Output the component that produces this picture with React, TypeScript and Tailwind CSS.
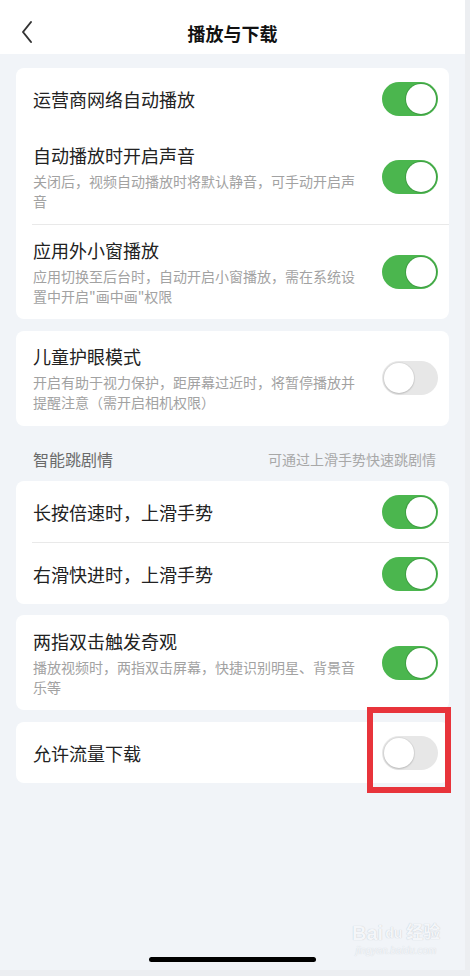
import React from "react";

const FONT = { fontFamily: '"Noto Sans CJK SC", "Noto Sans", sans-serif' };

function Toggle({ on }: { on: boolean }) {
  if (on) {
    return (
      <div className="flex h-[34px] w-[56px] shrink-0 items-center justify-end rounded-full bg-[#4bb64e] p-[2px]">
        <div className="h-[30px] w-[30px] rounded-full bg-white shadow-[0_0_0_1px_#3f9f43]" />
      </div>
    );
  }
  return (
    <div className="flex h-[34px] w-[56px] shrink-0 items-center justify-start rounded-full bg-[#e7e7e7] p-[2px]">
      <div className="h-[30px] w-[30px] rounded-full bg-white shadow-[0_1px_2px_rgba(0,0,0,0.15),0_0_0_1px_#dcdcdc]" />
    </div>
  );
}

function SimpleRow({ title, on, h = "h-[61px]" }: { title: string; on: boolean; h?: string }) {
  return (
    <div className={`flex ${h} items-center justify-between pl-[17px] pr-[11px]`}>
      <div className="text-[18px] leading-[24px] text-[#222222]">{title}</div>
      <Toggle on={on} />
    </div>
  );
}

function DescRow({
  title,
  desc,
  on,
  pt = "pt-[13px]",
  pb = "pb-[13px]",
}: {
  title: string;
  desc: string;
  on: boolean;
  pt?: string;
  pb?: string;
}) {
  return (
    <div className={`flex items-center justify-between gap-[16px] pl-[17px] pr-[11px] ${pt} ${pb}`}>
      <div className="w-[331px]">
        <div className="h-[24px] text-[18px] leading-[24px] text-[#222222]">{title}</div>
        <div className="mt-[4px] text-[14px] leading-[20px] text-[#a2a2a2]">{desc}</div>
      </div>
      <Toggle on={on} />
    </div>
  );
}

function Divider() {
  return <div className="ml-[16px] h-px bg-[#e9e9e9]" />;
}

export default function App() {
  return (
    <div className="relative flex h-[976px] w-[470px] flex-col bg-[#eceef1]" style={FONT}>
      <div className="flex h-[970px] w-[465px] flex-col bg-[#f1f4f8]">
        {/* Header */}
        <div className="relative flex h-[54px] items-center justify-center bg-white">
          <svg
            className="absolute left-[18px] top-[20px]"
            width="18"
            height="24"
            viewBox="0 0 18 24"
            fill="none"
          >
            <path d="M13 2 L5 12 L13 22" stroke="#333333" strokeWidth="2" strokeLinecap="round" strokeLinejoin="round" />
          </svg>
          <div className="mt-[12px] text-[18px] font-bold leading-[24px] text-[#111111]">播放与下载</div>
        </div>

        <div className="flex flex-col px-[16px] pt-[14px]">
          {/* Card 1 */}
          <div className="rounded-[8px] bg-white">
            <SimpleRow title="运营商网络自动播放" on h="h-[62px]" />
            <DescRow
              title="自动播放时开启声音"
              desc="关闭后，视频自动播放时将默认静音，可手动开启声音"
              on
            />
            <Divider />
            <DescRow
              title="应用外小窗播放"
              desc={'应用切换至后台时，自动开启小窗播放，需在系统设置中开启"画中画"权限'}
              on
            />
          </div>

          {/* Card 2 */}
          <div className="mt-[12px] rounded-[8px] bg-white">
            <DescRow
              title="儿童护眼模式"
              desc="开启有助于视力保护，距屏幕过近时，将暂停播放并提醒注意（需开启相机权限）"
              on={false}
              pt="pt-[13px]"
              pb="pb-[14px]"
            />
          </div>

          {/* Section header */}
          <div className="flex items-center justify-between pl-[17px] pr-[13px] pt-[21px] pb-[10px]">
            <div className="text-[16px] leading-[24px] text-[#6a6a6a]">智能跳剧情</div>
            <div className="text-[14px] leading-[24px] text-[#a8a8a8]">可通过上滑手势快速跳剧情</div>
          </div>

          {/* Card 3 */}
          <div className="rounded-[8px] bg-white">
            <SimpleRow title="长按倍速时，上滑手势" on />
            <Divider />
            <SimpleRow title="右滑快进时，上滑手势" on />
          </div>

          {/* Card 4 */}
          <div className="mt-[11px] rounded-[8px] bg-white">
            <DescRow
              title="两指双击触发奇观"
              desc="播放视频时，两指双击屏幕，快捷识别明星、背景音乐等"
              on
              pt="pt-[14px]"
              pb="pb-[13px]"
            />
          </div>

          {/* Card 5 */}
          <div className="mt-[12px] rounded-[8px] bg-white">
            <SimpleRow title="允许流量下载" on={false} />
          </div>
        </div>

        <div className="flex-1" />
        <div className="flex justify-center pb-[8px]">
          <div className="h-[5px] w-[167px] rounded-full bg-black" />
        </div>
      </div>

      {/* Red highlight box */}
      <div className="absolute left-[367px] top-[707px] h-[86px] w-[84px] border-[6px] border-[#e8343b]" />

      {/* Watermark */}
      <div className="absolute left-[352px] top-[922px] flex flex-col items-center text-[#f4f6f9]" style={{ fontFamily: '"Liberation Sans", "Noto Sans CJK SC", sans-serif' }}>
        <div className="flex items-center text-[20px] font-bold leading-[22px]" style={{ textShadow: "0 0 1px #b9bfc7" }}>
          <span>Bai</span>
          <span className="ml-[2px] text-[14px]">du</span>
          <span className="ml-[4px] text-[17px]">经验</span>
        </div>
        <div className="text-[10px] italic leading-[14px]" style={{ textShadow: "0 0 1px #c9ced5" }}>jingyan.baidu.com</div>
      </div>
    </div>
  );
}
